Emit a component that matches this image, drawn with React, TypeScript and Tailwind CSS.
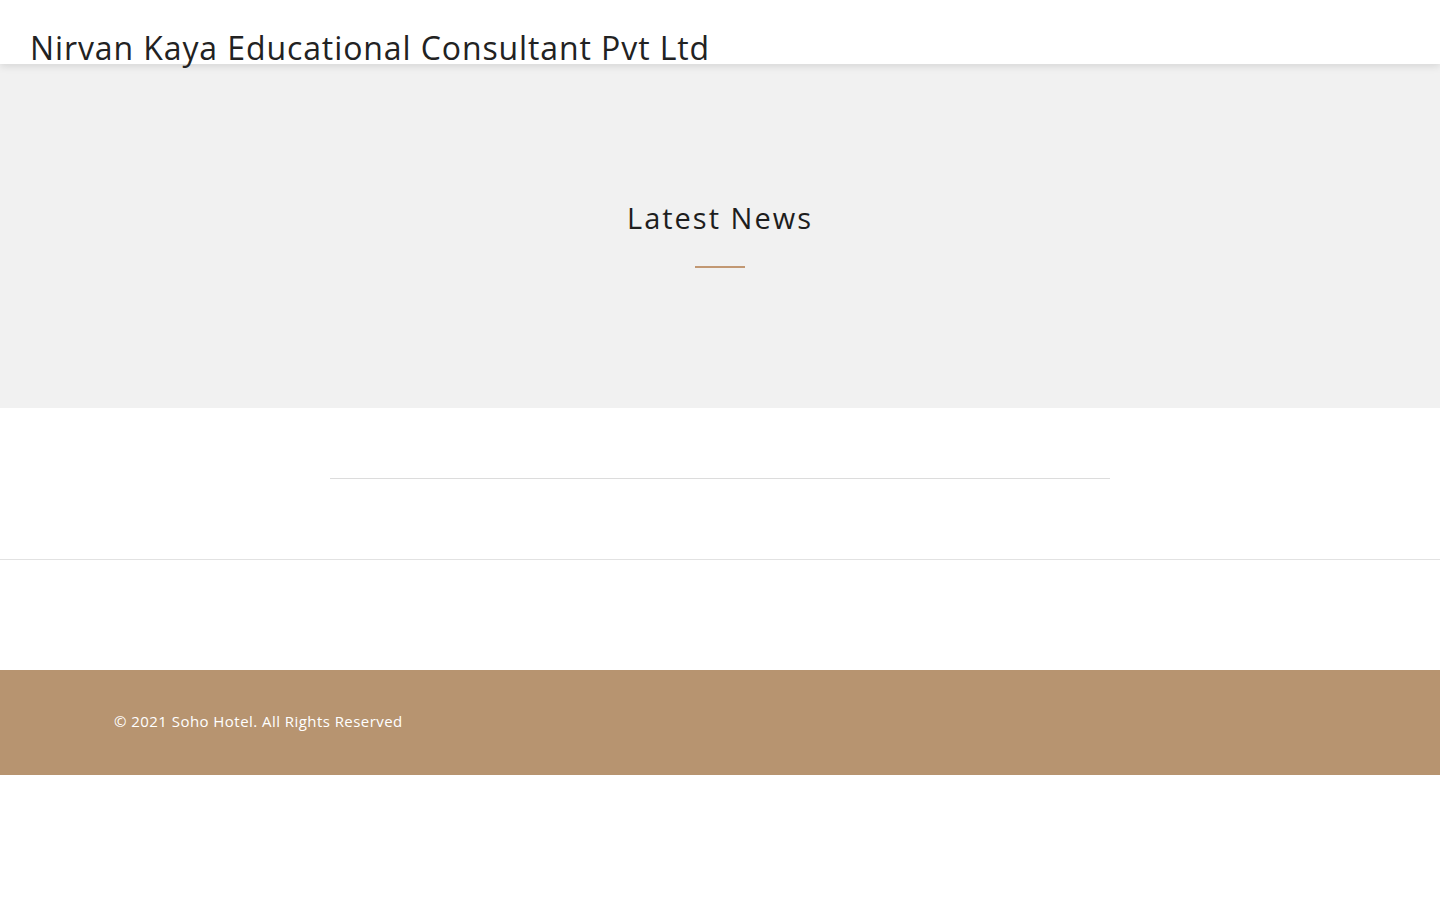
export default function App() {
  return (
    <div className="min-h-[900px] bg-white" style={{ fontFamily: '"Open Sans", "Noto Sans", sans-serif' }}>
      <header className="relative z-10 h-16 bg-white shadow-[0_2px_8px_rgba(0,0,0,0.12)]">
        <div className="pl-[30px] pt-[27px]">
          <span className="block text-[32px] leading-[42px] text-[#222] font-normal tracking-[0.9px]">Nirvan Kaya Educational Consultant Pvt Ltd</span>
        </div>
      </header>
      <section className="h-[344px] bg-[#f1f1f1] flex flex-col items-center pt-[134px]">
        <h1 className="text-[29px] leading-[40px] text-[#1e1e1e] tracking-[2px]">Latest News</h1>
        <div className="mt-[28px] w-[50px] h-[2px] bg-[#c29873]" />
      </section>
      <section className="h-[152px] border-b border-[#e2e2e2]">
        <div className="mx-auto w-[780px] pt-[70px]">
          <div className="h-px bg-[#dcdcdc]" />
        </div>
      </section>
      <div className="h-[110px]" />
      <footer className="h-[105px] bg-[#b79470] flex items-center pl-[114px] pb-[2px]">
        <p className="text-[15px] text-white tracking-[0.45px]">© 2021 Soho Hotel. All Rights Reserved</p>
      </footer>
    </div>
  );
}
